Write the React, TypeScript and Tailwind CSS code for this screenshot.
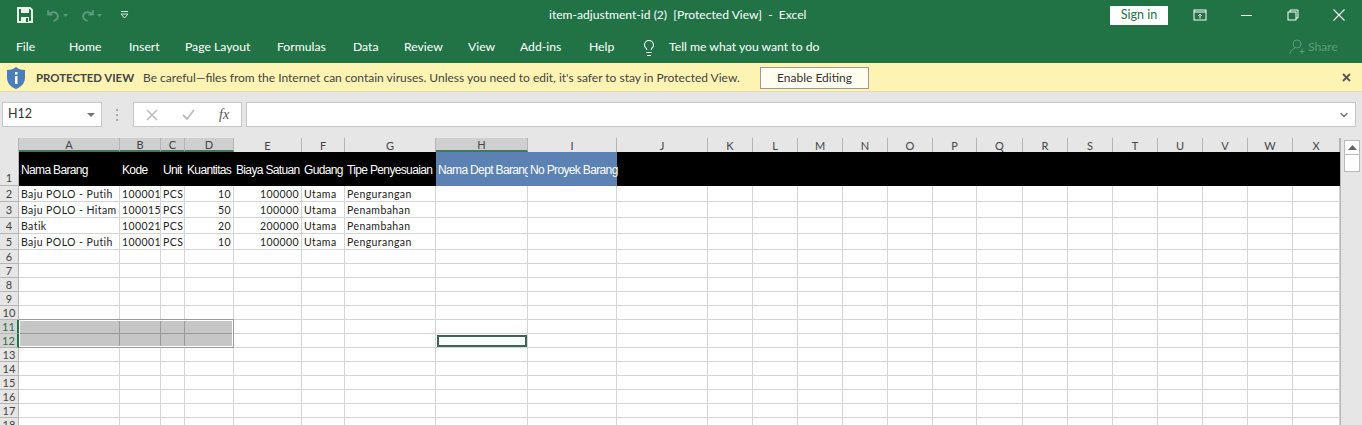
import { ChevronDown, Lightbulb } from "lucide-react";

const COLUMNS = [
  { id: "A", width: 101 },
  { id: "B", width: 41 },
  { id: "C", width: 24 },
  { id: "D", width: 49 },
  { id: "E", width: 68 },
  { id: "F", width: 43 },
  { id: "G", width: 91 },
  { id: "H", width: 92 },
  { id: "I", width: 89 },
  { id: "J", width: 91 },
  { id: "K", width: 45 },
  { id: "L", width: 45 },
  { id: "M", width: 45 },
  { id: "N", width: 45 },
  { id: "O", width: 45 },
  { id: "P", width: 44 },
  { id: "Q", width: 46 },
  { id: "R", width: 45 },
  { id: "S", width: 45 },
  { id: "T", width: 45 },
  { id: "U", width: 45 },
  { id: "V", width: 45 },
  { id: "W", width: 45 },
  { id: "X", width: 47 },
];

const TABS = [
  { label: "File", width: 53 },
  { label: "Home", width: 60 },
  { label: "Insert", width: 56 },
  { label: "Page Layout", width: 92 },
  { label: "Formulas", width: 76 },
  { label: "Data", width: 51 },
  { label: "Review", width: 64 },
  { label: "View", width: 52 },
  { label: "Add-ins", width: 69 },
  { label: "Help", width: 53 },
];

const HEADERS = ["Nama Barang", "Kode", "Unit", "Kuantitas", "Biaya Satuan", "Gudang", "Tipe Penyesuaian", "Nama Dept Barang", "No Proyek Barang"];

const ROWS = [
  ["Baju POLO - Putih", "100001", "PCS", "10", "100000", "Utama", "Pengurangan"],
  ["Baju POLO - Hitam", "100015", "PCS", "50", "100000", "Utama", "Penambahan"],
  ["Batik", "100021", "PCS", "20", "200000", "Utama", "Penambahan"],
  ["Baju POLO - Putih", "100001", "PCS", "10", "100000", "Utama", "Pengurangan"],
];

const EMPTY_ROWS = [6, 7, 8, 9, 10, 11, 12, 13, 14, 15, 16, 17, 18];
const HIGHLIGHTED = ["A", "B", "C", "D", "H"];

function HeaderRow() {
  return (
    <div className="flex h-[34px]">
      <div className="flex w-[19px] shrink-0 items-end justify-center border-r border-b border-[#b5b5b5] bg-[#e6e6e6] text-[11px] leading-[14px] text-[#444]">1</div>
      {COLUMNS.map((col, i) => (
        <div
          key={col.id}
          style={{ width: col.width }}
          className={`flex shrink-0 items-center whitespace-nowrap pl-[2px] pt-[2px] font-['Liberation_Sans',sans-serif] text-[12px] tracking-[-0.65px] text-white ${
            i === 7 || i === 8 ? "bg-[#5b82b3]" : "bg-black"
          } ${i === 7 ? "overflow-hidden" : "overflow-visible"} ${i === 8 ? "relative z-10" : ""}`}
        >
          {HEADERS[i]}
        </div>
      ))}
    </div>
  );
}

function DataRow({ index, values }: { index: number; values: string[] }) {
  return (
    <div className="flex h-[16px]">
      <div className="flex w-[19px] shrink-0 items-center justify-center border-r border-b border-[#b5b5b5] bg-[#e6e6e6] text-[11px] leading-none text-[#444]">{index}</div>
      {COLUMNS.map((col, i) => (
        <div
          key={col.id}
          style={{ width: col.width }}
          className={`flex shrink-0 items-center whitespace-nowrap border-r border-b border-[#d4d4d4] px-[2px] pt-px text-[10.5px] leading-none tracking-[0.42px] text-[#222] ${
            i === 3 || i === 4 ? "justify-end" : ""
          }`}
        >
          {values[i]}
        </div>
      ))}
    </div>
  );
}

function EmptyRow({ index }: { index: number }) {
  const selectedRow = index === 11 || index === 12;
  return (
    <div className="flex h-[14px]">
      <div
        className={`flex w-[19px] shrink-0 items-center justify-center border-b text-[11px] leading-none ${
          selectedRow
            ? "border-r-2 border-r-[#217346] border-b-[#b5b5b5] bg-[#d4d4d4] text-[#2f6b4c]"
            : "border-r border-[#b5b5b5] bg-[#e6e6e6] text-[#444]"
        }`}
      >
        {index}
      </div>
      {COLUMNS.map((col, i) => (
        <div
          key={col.id}
          style={{ width: col.width }}
          className={`shrink-0 border-r border-b ${
            selectedRow && i < 4 ? "border-[#999] bg-[#c6c6c6]" : "border-[#d4d4d4]"
          }`}
        />
      ))}
    </div>
  );
}

function TitleBar() {
  return (
    <div className="flex h-[30px] items-center bg-[#217346] text-white">
      <div className="flex w-[140px] shrink-0 items-center">
        <svg width="16" height="16" viewBox="0 0 16 16" className="ml-[17px]">
          <path d="M1 1h12l2 2v12H1z" fill="none" stroke="#e8f3ec" strokeWidth="2" />
          <rect x="4" y="2" width="8" height="4" fill="#e8f3ec" />
          <rect x="4" y="10" width="8" height="5" fill="#e8f3ec" />
          <rect x="9" y="11" width="2" height="4" fill="#217346" />
        </svg>
        <svg width="15" height="13" viewBox="0 0 14 12" className="ml-[13px]" fill="none" stroke="#5f9a7b" strokeWidth="1.8">
          <path d="M2 1v4h4" />
          <path d="M2 5c3-3 8-3 9 1 .5 2-1 4-4 5" />
        </svg>
        <svg width="5" height="3" viewBox="0 0 5 3" className="ml-[2px]"><path d="M0 0h5L2.5 3z" fill="#5f9a7b" /></svg>
        <svg width="15" height="13" viewBox="0 0 14 12" className="ml-[12px]" fill="none" stroke="#5f9a7b" strokeWidth="1.8">
          <path d="M12 1v4H8" />
          <path d="M12 5C9 2 4 2 3 6c-.5 2 1 4 4 5" />
        </svg>
        <svg width="5" height="3" viewBox="0 0 5 3" className="ml-[2px]"><path d="M0 0h5L2.5 3z" fill="#5f9a7b" /></svg>
        <svg width="9" height="8" viewBox="0 0 9 8" className="ml-[18px]">
          <path d="M1 .5h7" stroke="#d6e7dd" fill="none" />
          <path d="M1 3h7L4.5 7z" fill="none" stroke="#d6e7dd" />
        </svg>
      </div>
      <div className="flex-1 pl-[409px] pt-px text-[12.1px] whitespace-pre">item-adjustment-id (2)  [Protected View]  -  Excel</div>
      <div className="ml-[1px] flex h-[19px] w-[58px] items-center justify-center bg-white text-[12.5px] text-[#217346]">Sign in</div>
      <svg width="14" height="12" viewBox="0 0 14 12" className="ml-[25px]" fill="none" stroke="white">
        <rect x="1" y="1" width="12" height="10" />
        <path d="M1 3h12M7 9.5V5M5 7l2-2 2 2" />
      </svg>
      <div className="ml-[34px] h-px w-[11px] bg-white" />
      <svg width="12" height="12" viewBox="0 0 12 12" className="ml-[35px]" fill="none" stroke="white">
        <rect x="1" y="3" width="8" height="8" />
        <path d="M3 3V1h8v8H9" />
      </svg>
      <svg width="12" height="12" viewBox="0 0 12 12" className="ml-[34px] mr-[17px]" fill="none" stroke="white" strokeWidth="1.1">
        <path d="M.5.5l11 11M11.5.5l-11 11" />
      </svg>
    </div>
  );
}

function RibbonTabs() {
  return (
    <div className="flex h-[33px] items-center bg-[#217346] pl-[16px] pt-[2px] text-[12.2px] text-white">
      {TABS.map((tab) => (
        <div key={tab.label} style={{ width: tab.width }} className="shrink-0">
          {tab.label}
        </div>
      ))}
      <Lightbulb size={18} strokeWidth={1.4} className="-ml-[2px] shrink-0" />
      <div className="ml-[11px] flex-1">Tell me what you want to do</div>
      <div className="mr-[24px] flex items-center gap-[3px] text-[#5f9a7b]">
        <svg width="16" height="16" viewBox="0 0 16 16" fill="none" stroke="#5f9a7b">
          <circle cx="8" cy="5" r="4" />
          <path d="M1 15c0-3 2.500-5 5-6M13 10v5M10.500 12.500h5" />
        </svg>
        Share
      </div>
    </div>
  );
}

function ProtectedBar() {
  return (
    <div className="flex h-[29px] items-center border-b border-[#e3dcae] bg-[#fdf3b3] pt-px text-[12px] whitespace-nowrap text-[#444]">
      <svg width="18" height="22" viewBox="0 0 18 22" className="ml-[7px]">
        <path d="M9 0c2 2 5 3 9 3v8c0 5-4 9-9 11-5-2-9-6-9-11V3c4 0 7-1 9-3z" fill="#4a7ebb" />
        <rect x="8" y="9" width="2.500" height="8" fill="white" />
        <rect x="8" y="5" width="2.500" height="2.500" fill="white" />
      </svg>
      <span className="ml-[11px] w-[107px] shrink-0 text-[11.4px] font-bold">PROTECTED VIEW</span>
      <span className="w-[617px] shrink-0">Be careful—files from the Internet can contain viruses. Unless you need to edit, it's safer to stay in Protected View.</span>
      <div className="flex h-[22px] w-[109px] items-center justify-center border border-[#999] bg-[#fffdf0] text-[#333]">Enable Editing</div>
      <svg width="9" height="9" viewBox="0 0 9 9" className="ml-auto mr-[11px]" fill="none" stroke="#555" strokeWidth="1.800">
        <path d="M1 1l7 7M8 1L1 8" />
      </svg>
    </div>
  );
}

function FormulaBar() {
  return (
    <div className="flex h-[46px] items-start bg-[#e6e6e6] pt-[10px]">
      <div className="ml-[2px] flex h-[25px] w-[100px] items-center justify-between border border-[#c6c6c6] bg-white pl-[5px] pr-[6px] text-[12.5px] text-[#333]">
        H12
        <svg width="8" height="4" viewBox="0 0 8 4"><path d="M0 0h8L4 4z" fill="#777" /></svg>
      </div>
      <div className="ml-[14px] mt-[7px] flex flex-col gap-[3px]">
        <div className="h-[2px] w-[2px] bg-[#aaa]" />
        <div className="h-[2px] w-[2px] bg-[#aaa]" />
        <div className="h-[2px] w-[2px] bg-[#aaa]" />
      </div>
      <div className="ml-[15px] flex h-[25px] w-[109px] items-center border border-[#c6c6c6] bg-white">
        <svg width="12" height="12" viewBox="0 0 12 12" className="ml-[12px]" fill="none" stroke="#bbb" strokeWidth="1.500"><path d="M1 1l10 10M11 1L1 11" /></svg>
        <svg width="13" height="11" viewBox="0 0 13 11" className="ml-[24px]" fill="none" stroke="#bbb" strokeWidth="1.800"><path d="M1 6l4 4 7-9" /></svg>
        <span className="ml-[24px] font-['Liberation_Serif',serif] text-[14px] italic text-[#555]">fx</span>
      </div>
      <div className="ml-[4px] mr-[6px] flex h-[25px] flex-1 items-center justify-end border border-[#c6c6c6] bg-white pr-[5px]">
        <ChevronDown size={12} strokeWidth={3} className="text-[#777]" />
      </div>
    </div>
  );
}

function Sheet() {
  return (
    <div className="relative flex h-[135px] grow overflow-hidden bg-white">
      <div className="w-[1340px] shrink-0">
        <div className="flex h-[14px] bg-[#e6e6e6]">
          <div className="w-[19px] shrink-0 border-r border-[#b5b5b5]" />
          {COLUMNS.map((col) => {
            const active = HIGHLIGHTED.includes(col.id);
            return (
              <div
                key={col.id}
                style={{ width: col.width }}
                className={`flex shrink-0 items-center justify-center border-r border-[#b5b5b5] pt-px text-[11px] leading-none text-[#444] ${
                  active ? "border-b-2 border-b-[#3b7a5c] bg-[#cfcfcf]" : ""
                }`}
              >
                {col.id}
              </div>
            );
          })}
        </div>
        <HeaderRow />
        {ROWS.map((values, i) => (
          <DataRow key={i} index={i + 2} values={values} />
        ))}
        {EMPTY_ROWS.map((n) => (
          <EmptyRow key={n} index={n} />
        ))}
      </div>
      <div className="flex-1 border-l border-[#b5b5b5] bg-[#e6e6e6] pl-[3px] pt-[2px]">
        <div className="flex h-[15px] w-[16px] items-center justify-center border border-[#bbb] bg-white">
          <svg width="9" height="5" viewBox="0 0 9 5"><path d="M4.500 0L9 5H0z" fill="#666" /></svg>
        </div>
        <div className="h-[17px] w-[16px] border-x border-b border-[#bbb] bg-white" />
      </div>
      <div className="absolute left-[19px] top-[181px] h-[29px] w-[215px] border-y border-r border-[#999]">
        <div className="h-full border border-white" />
      </div>
      <div className="absolute left-[437px] top-[197px] h-[12px] w-[90px] border-2 border-[#3f6356] bg-[#f8fdfb]" />
    </div>
  );
}

export default function App() {
  return (
    <div className="flex h-[425px] w-[1362px] flex-col overflow-hidden bg-white font-['Lato',sans-serif]">
      <TitleBar />
      <RibbonTabs />
      <ProtectedBar />
      <FormulaBar />
      <Sheet />
    </div>
  );
}
